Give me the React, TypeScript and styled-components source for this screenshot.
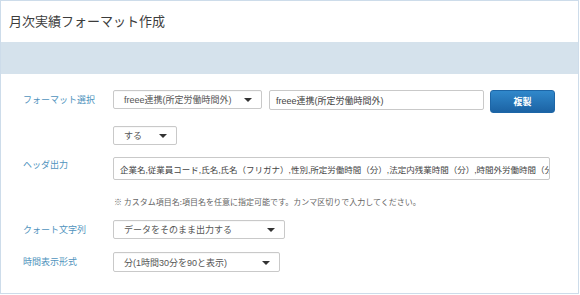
import React from "react";
import styled, { createGlobalStyle } from "styled-components";

const Global = createGlobalStyle`
  html, body { margin: 0; padding: 0; background: #ffffff; }
  body { font-family: "Liberation Sans", "Noto Sans CJK JP", sans-serif; }
  * { box-sizing: border-box; }
`;

const Panel = styled.div`
  width: 579px;
  height: 294px;
  border: 1px solid #cddcea;
  background: #fff;
  display: flex;
  flex-direction: column;
`;

const Header = styled.div`
  height: 41px;
  display: flex;
  align-items: center;
  padding-left: 8px;
  padding-bottom: 2px;
  font-size: 13px;
  color: #3c3c3c;
  font-family: "Noto Sans CJK JP", sans-serif;
`;

const Band = styled.div`
  height: 32px;
  background: #d5e2ec;
`;

const Body = styled.div`
  padding: 16px 0 0 22px;
  display: flex;
  flex-direction: column;
`;

const Row = styled.div<{ $mt?: number }>`
  display: flex;
  align-items: flex-start;
  margin-top: ${(p) => p.$mt ?? 0}px;
`;

const Label = styled.div<{ $h?: number }>`
  width: 90px;
  height: ${(p) => p.$h ?? 19}px;
  line-height: ${(p) => p.$h ?? 19}px;
  font-size: 9px;
  color: #4f93bd;
  font-family: "Noto Sans CJK JP", sans-serif;
  white-space: nowrap;
`;

const Select = styled.div<{ $w: number; $h?: number }>`
  width: ${(p) => p.$w}px;
  height: ${(p) => p.$h ?? 19}px;
  border: 1px solid #c9c9c9;
  border-radius: 2px;
  background: #fff;
  display: flex;
  align-items: center;
  justify-content: space-between;
  padding: 0 9px 0 10px;
  font-size: 9px;
  color: #555;
  white-space: nowrap;
  box-shadow: inset 0 1px 1px rgba(0, 0, 0, 0.03);
`;

const Arrow = styled.span`
  width: 0;
  height: 0;
  border-left: 4px solid transparent;
  border-right: 4px solid transparent;
  border-top: 4px solid #333;
  margin-top: 1px;
`;

const TextBox = styled.div<{ $w: number; $h: number; $ml?: number; $fs?: number }>`
  width: ${(p) => p.$w}px;
  height: ${(p) => p.$h}px;
  margin-left: ${(p) => p.$ml ?? 0}px;
  border: 1px solid #c9c9c9;
  border-radius: 2px;
  background: #fff;
  display: flex;
  align-items: center;
  padding: 0 6px;
  font-size: ${(p) => p.$fs ?? 9}px;
  color: #444;
  white-space: nowrap;
  overflow: hidden;
`;

const Button = styled.button`
  width: 65px;
  height: 23px;
  margin-left: 6px;
  border: 1px solid #1d66a7;
  border-radius: 3px;
  background: linear-gradient(#3088cb, #1c63a4);
  color: #fff;
  font-size: 9px;
  font-weight: bold;
  font-family: "Noto Sans CJK JP", sans-serif;
  padding: 0;
`;

const Note = styled.div`
  margin: 16px 0 0 91px;
  font-size: 8px;
  line-height: 12px;
  color: #666;
  font-family: "Noto Sans CJK JP", sans-serif;
`;

const header =
  "企業名,従業員コード,氏名,氏名（フリガナ）,性別,所定労働時間（分）,法定内残業時間（分）,時間外労働時間（分）";

export default function App() {
  return (
    <>
      <Global />
      <Panel>
        <Header>月次実績フォーマット作成</Header>
        <Band />
        <Body>
          <Row>
            <Label>フォーマット選択</Label>
            <Select $w={149}>
              <span>freee連携(所定労働時間外)</span>
              <Arrow />
            </Select>
            <TextBox $w={215} $h={20} $ml={7}>freee連携(所定労働時間外)</TextBox>
            <Button>複製</Button>
          </Row>
          <Row $mt={13}>
            <Label />
            <Select $w={64}>
              <span>する</span>
              <Arrow />
            </Select>
          </Row>
          <Row $mt={12}>
            <Label $h={16}>ヘッダ出力</Label>
            <TextBox $w={437} $h={23} $fs={8.5}>{header}</TextBox>
          </Row>
          <Note>※ カスタム項目名:項目名を任意に指定可能です。カンマ区切りで入力してください。</Note>
          <Row $mt={12}>
            <Label>クォート文字列</Label>
            <Select $w={172}>
              <span>データをそのまま出力する</span>
              <Arrow />
            </Select>
          </Row>
          <Row $mt={13}>
            <Label $h={20}>時間表示形式</Label>
            <Select $w={167} $h={20}>
              <span>分(1時間30分を90と表示)</span>
              <Arrow />
            </Select>
          </Row>
        </Body>
      </Panel>
    </>
  );
}
